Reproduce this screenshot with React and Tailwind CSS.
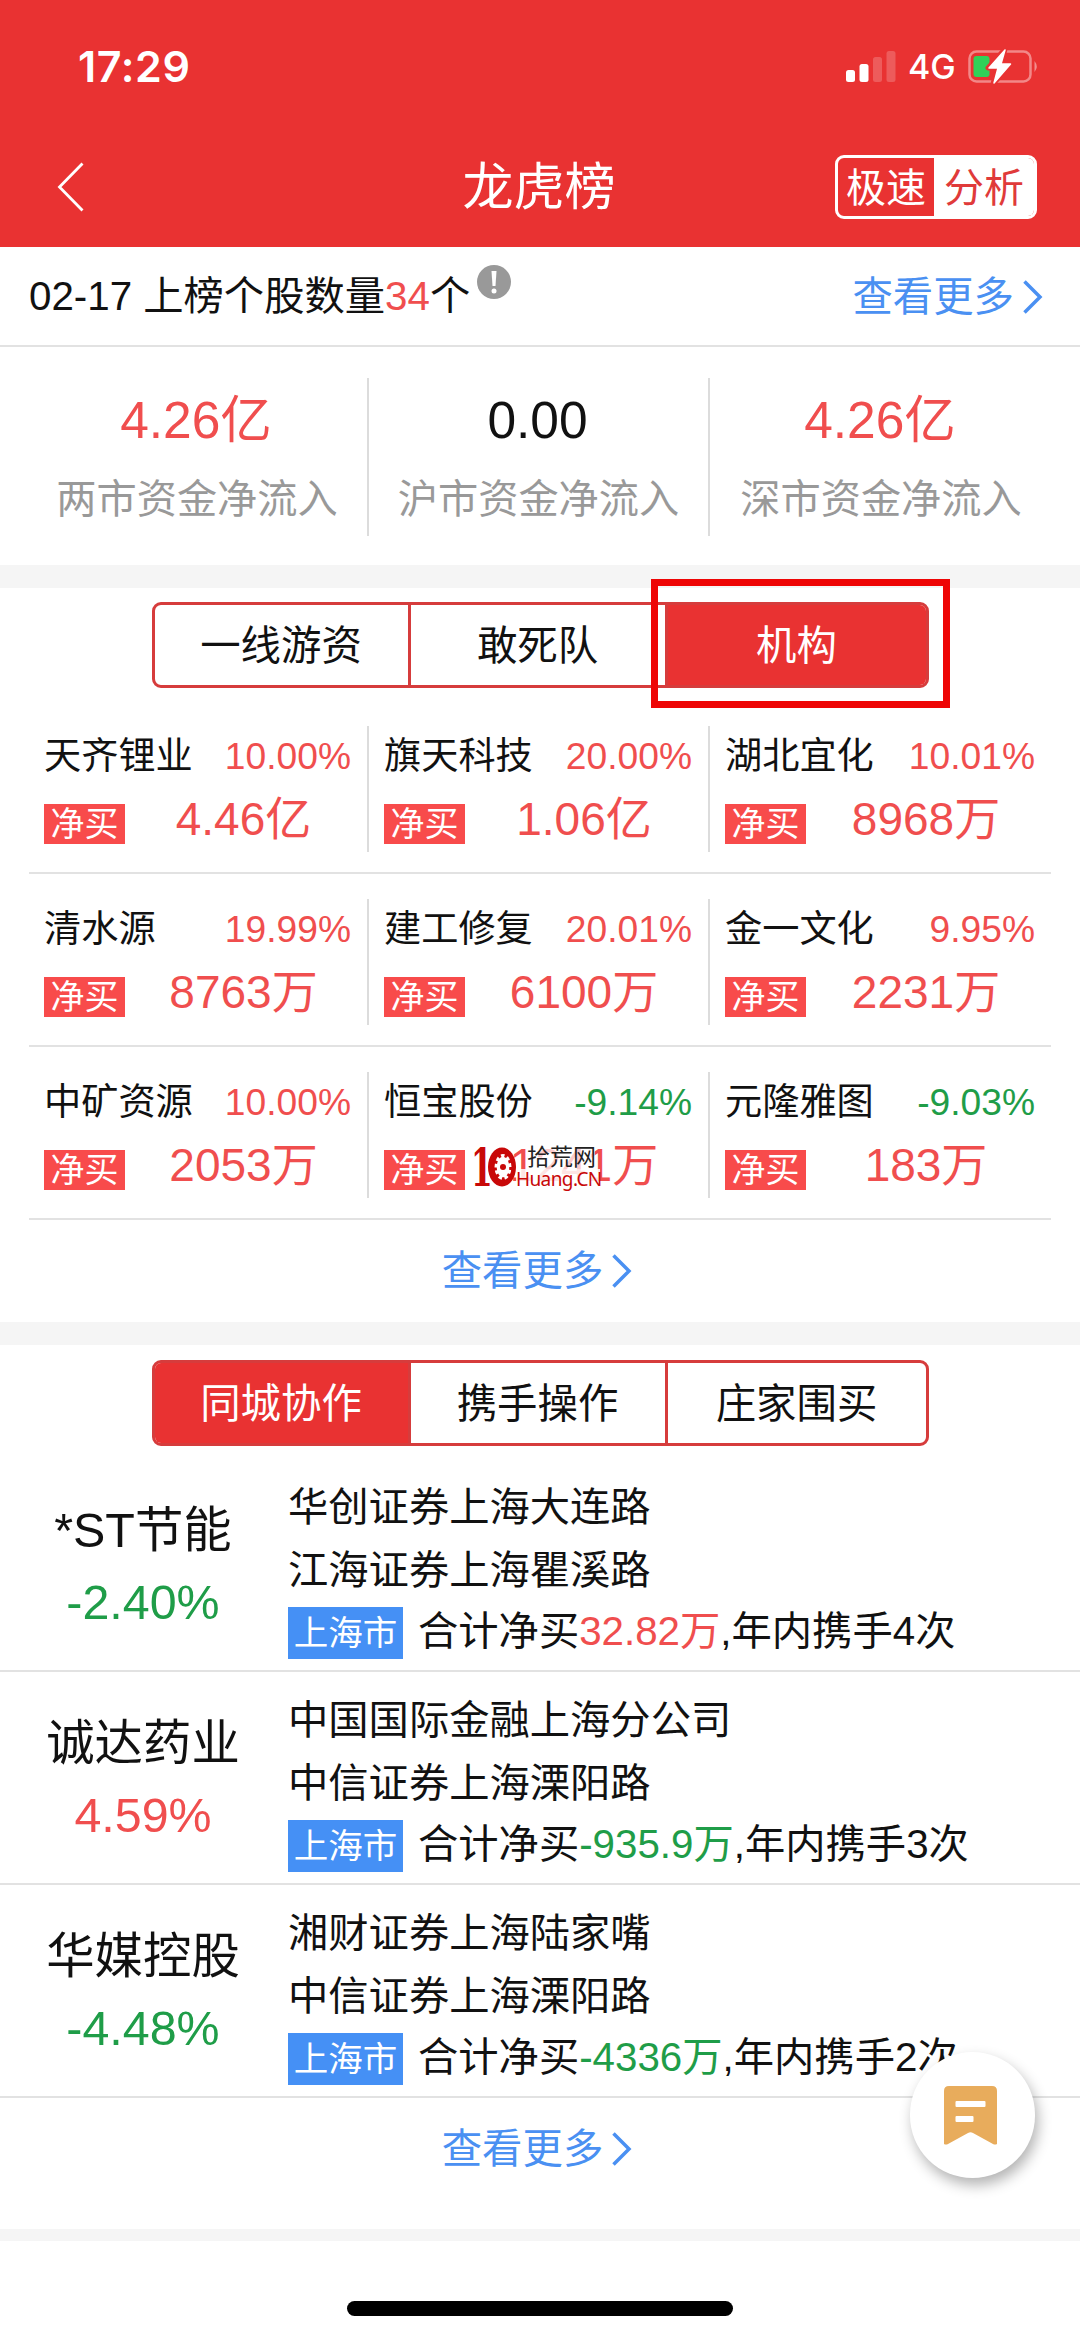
import React from "react";

const RED = "text-[#f04e4e]";
const GREEN = "text-[#1f9d48]";

const stats = [
  { value: "4.26亿", label: "两市资金净流入", color: RED },
  { value: "0.00", label: "沪市资金净流入", color: "text-[#111]" },
  { value: "4.26亿", label: "深市资金净流入", color: RED },
];

const stockRows = [
  [
    { name: "天齐锂业", pct: "10.00%", value: "4.46亿" },
    { name: "旗天科技", pct: "20.00%", value: "1.06亿" },
    { name: "湖北宜化", pct: "10.01%", value: "8968万" },
  ],
  [
    { name: "清水源", pct: "19.99%", value: "8763万" },
    { name: "建工修复", pct: "20.01%", value: "6100万" },
    { name: "金一文化", pct: "9.95%", value: "2231万" },
  ],
  [
    { name: "中矿资源", pct: "10.00%", value: "2053万" },
    { name: "恒宝股份", pct: "-9.14%", value: "1241万", stamped: true },
    { name: "元隆雅图", pct: "-9.03%", value: "183万" },
  ],
];

const deals = [
  { name: "*ST节能", pct: "-2.40%", first: "华创证券上海大连路", second: "江海证券上海瞿溪路", net: "32.82万", times: 4 },
  { name: "诚达药业", pct: "4.59%", first: "中国国际金融上海分公司", second: "中信证券上海溧阳路", net: "-935.9万", times: 3 },
  { name: "华媒控股", pct: "-4.48%", first: "湘财证券上海陆家嘴", second: "中信证券上海溧阳路", net: "-4336万", times: 2 },
];

const tone = (s) => (s.startsWith("-") ? GREEN : RED);

function StatusBar() {
  return (
    <div className="flex h-[134px] items-start justify-between pl-[78px] pr-[41px] text-white">
      <div className="mt-[41px] font-['Inter'] text-[43px] font-semibold leading-[50px] tracking-[0.6px]">17:29</div>
      <div className="mt-[46px] flex h-[40px] items-center">
        <svg width="50" height="32" viewBox="0 0 50 32" fill="#fff">
          <rect x="0" y="20" width="9" height="12" rx="2.5" />
          <rect x="13.5" y="14" width="9" height="18" rx="2.5" />
          <rect x="27" y="7" width="9" height="25" rx="2.5" opacity=".2" />
          <rect x="40.500" y="1" width="9" height="31" rx="2.5" opacity=".2" />
        </svg>
        <span className="ml-[12px] mt-[2px] w-[48px] font-['Inter'] text-[34px] font-medium leading-[40px]">4G</span>
        <svg className="ml-[12px]" width="71" height="36" viewBox="0 0 71 36">
          <rect x="1.500" y="3.500" width="61" height="30" rx="7" fill="none" stroke="#fff" strokeOpacity=".42" strokeWidth="2.500" />
          <path d="M66.500 13 q4.500 5.500 0 11 z" fill="#fff" opacity=".45" />
          <rect x="5.500" y="8" width="16" height="21" rx="3" fill="#30d158" />
          <path d="M37 1 L20 20 H29 L25 36 L43 16 H33.500 Z" fill="#fff" stroke="#e93232" strokeWidth="5" strokeLinejoin="round" />
          <path d="M37 2 L21 20 H30 L26 35 L42.500 16 H33 Z" fill="#fff" stroke="#fff" strokeWidth="1.500" strokeLinejoin="round" />
        </svg>
      </div>
    </div>
  );
}

function NavBar() {
  return (
    <div className="grid h-[113px] grid-cols-[1fr_auto_1fr] items-start px-[43px] text-white">
      <svg className="ml-[13px] mt-[27px]" width="30" height="52" viewBox="0 0 30 52" fill="none" stroke="#fff" strokeWidth="2.800">
        <path d="M26.500 2.500 L3.500 26 L26.500 49.500" />
      </svg>
      <h1 className="-ml-[2px] mt-[22px] text-[51px] font-normal leading-[64px]">龙虎榜</h1>
      <div className="mt-[21px] flex h-[64px] w-[202px] justify-self-end overflow-hidden rounded-[9px] border-[3px] border-white text-center text-[40px] leading-[60px]">
        <span className="w-[96px]">极速</span>
        <span className="flex-1 bg-white text-[#e03a3a]">分析</span>
      </div>
    </div>
  );
}

function Chevron() {
  return (
    <svg width="22" height="36" viewBox="0 0 22 36" fill="none" stroke="#4a90f2" strokeWidth="3.500">
      <path d="M2.500 2.500 L18 18 L2.500 33.500" />
    </svg>
  );
}

function More() {
  return (
    <a className="flex items-center gap-[8px] text-[40.4px] leading-[50px] text-[#4a90f2]">
      查看更多
      <Chevron />
    </a>
  );
}

function Tabs({ items, active }) {
  return (
    <div className="mx-auto grid h-[86px] w-[777px] grid-cols-[256px_257px_258px] overflow-hidden rounded-[9px] border-[3px] border-[#d63c3c] text-center text-[40.4px] leading-[83px]">
      {items.map((t, i) => (
        <div
          key={t}
          className={
            (i === active ? "bg-[#e93232] text-white" : "text-[#111]") +
            (i < 2 ? " border-r-[3px] border-[#d63c3c]" : "")
          }
        >
          {t}
        </div>
      ))}
    </div>
  );
}

/* Site stamp that overlaps the amount in one cell */
function Stamp() {
  return (
    <div className="absolute left-[104px] top-[74px] flex h-[44px] w-[134px]">
      <span className="w-[15px] font-['DejaVu_Serif'] text-[52px] font-bold leading-[44px] text-[#c80808]">
        <span className="inline-block origin-left -translate-x-[2px] scale-x-[.6]">1</span>
      </span>
      <svg className="mt-[1px]" width="28" height="40" viewBox="0 0 28 40">
        <ellipse cx="14" cy="20" rx="14" ry="19.500" fill="#c80808" />
        <ellipse cx="15" cy="20" rx="8.500" ry="13" fill="#fff" />
        <ellipse cx="15" cy="20" rx="8" ry="12" fill="none" stroke="#c80808" strokeWidth="3.500" strokeDasharray="3 4" />
        <circle cx="15" cy="20" r="3" fill="#c80808" />
      </svg>
      <div className="whitespace-nowrap">
        <div className="ml-[11px] w-[68px] bg-white/70 text-[23px] leading-[23px] text-[#222]">拾荒网</div>
        <div className="w-[84px] bg-white/85 font-['Noto_Sans'] text-[19px] leading-[20px] tracking-[-0.6px] text-[#c80808]">Huang.CN</div>
      </div>
    </div>
  );
}

function StockCell({ stock, divided }) {
  return (
    <div className={"relative mt-[25px] h-[126px] pl-[15px] pr-[16px] " + (divided ? "border-r-2 border-[#dcdcdc]" : "")}>
      <div className="flex h-[61px] items-center justify-between text-[37.2px]">
        <span className="text-[#111]">{stock.name}</span>
        <span className={tone(stock.pct)}>{stock.pct}</span>
      </div>
      <div className="mt-[7px] flex h-[56px] items-start">
        <span className="mt-[10px] h-[40px] w-[81px] bg-[#f84b4b] text-center text-[34px] leading-[40px] text-white">净买</span>
        <span className={"flex-1 pl-[11px] text-center text-[46px] leading-[50px] " + RED}>{stock.value}</span>
      </div>
      {stock.stamped && <Stamp />}
    </div>
  );
}

function Deal({ deal }) {
  return (
    <div className="flex h-[213px] border-b-2 border-[#e2e2e2] text-[#111]">
      <div className="w-[286px] pt-[39px] text-center">
        <div className="text-[48.4px] leading-[64px]">{deal.name}</div>
        <div className={"mt-[8px] text-[48.4px] leading-[64px] " + tone(deal.pct)}>{deal.pct}</div>
      </div>
      <div className="pl-[2px] pt-[17px] text-[40.3px] leading-[63px]">
        <div>{deal.first}</div>
        <div>{deal.second}</div>
        <div className="mt-[5px] flex items-start">
          <span className="h-[52px] w-[115px] bg-[#4590f5] text-center text-[34.5px] leading-[52px] text-white">上海市</span>
          <span className="ml-[15px] whitespace-nowrap leading-[49px]">
            合计净买<span className={tone(deal.net)}>{deal.net}</span>,年内携手{deal.times}次
          </span>
        </div>
      </div>
    </div>
  );
}

export default function App() {
  return (
    <div className="relative flex h-[2339px] w-[1080px] flex-col overflow-hidden bg-white font-['Liberation_Sans','Noto_Sans_CJK_SC',sans-serif]">
      <header className="h-[247px] shrink-0 bg-[#e93232]">
        <StatusBar />
        <NavBar />
      </header>

      <section className="flex h-[100px] shrink-0 items-center justify-between border-b-2 border-[#e2e2e2] pl-[29px] pr-[36px] pt-[2px]">
        <div className="flex text-[40.300px] leading-[50px] text-[#111]">
          <span className="whitespace-pre">02-17 上榜个股数量<span className={RED}>34</span>个</span>
          <svg className="-mt-[7px] ml-[7px]" width="34" height="34" viewBox="0 0 34 34">
            <circle cx="17" cy="17" r="17" fill="#999" />
            <path d="M14.500 6 H19.500 L18.500 21 H15.500 Z" fill="#fff" />
            <circle cx="17" cy="26" r="2.500" fill="#fff" />
          </svg>
        </div>
        <More />
      </section>

      <section className="grid h-[218px] shrink-0 grid-cols-[342px_341px_342px] pl-[27px] pt-[31px]">
        {stats.map((s, i) => (
          <div key={s.label} className={"h-[158px] text-center " + (i < 2 ? "border-r-2 border-[#dcdcdc]" : "")}>
            <div className={"-ml-[2px] mt-[10px] text-[51.5px] leading-[64px] " + s.color}>{s.value}</div>
            <div className="mt-[23px] text-[40.200px] leading-[50px] text-[#999]">{s.label}</div>
          </div>
        ))}
      </section>

      <div className="h-[23px] shrink-0 bg-[#f5f5f5]" />

      <section className="shrink-0">
        <div className="relative h-[113px] pt-[14px]">
          <Tabs items={["一线游资", "敢死队", "机构"]} active={2} />
          <div className="absolute left-[651px] top-[-9px] h-[129px] w-[299px] border-[7px] border-[#ee0505]" />
        </div>
        {stockRows.map((row, i) => (
          <div key={i} className="mx-[29px] grid h-[173px] grid-cols-[340px_341px_341px] border-b-2 border-[#e2e2e2]">
            {row.map((s, j) => (
              <StockCell key={s.name} stock={s} divided={j < 2} />
            ))}
          </div>
        ))}
        <div className="flex h-[102px] items-center justify-center pr-[5px]">
          <More />
        </div>
      </section>

      <div className="h-[23px] shrink-0 bg-[#f5f5f5]" />

      <section className="shrink-0">
        <div className="h-[114px] pt-[15px]">
          <Tabs items={["同城协作", "携手操作", "庄家围买"]} active={0} />
        </div>
        {deals.map((d) => (
          <Deal key={d.name} deal={d} />
        ))}
        <div className="flex h-[101px] items-center justify-center pr-[5px]">
          <More />
        </div>
      </section>

      <div className="mt-[30px] h-[12px] shrink-0 bg-[#f5f5f5]" />
      <div className="mx-auto mt-[60px] h-[15px] w-[386px] shrink-0 rounded-full bg-black" />

      <button className="absolute left-[910px] top-[2052px] flex h-[126px] w-[125px] items-center justify-center rounded-full bg-white shadow-[3px_7px_14px_rgba(0,0,0,0.3)]">
        <svg className="-ml-[4px]" width="53" height="59" viewBox="0 0 53 59">
          <path d="M5 0 H48 Q53 0 53 5 V58 Q51 59 49 58 L29 47 Q26.500 45.500 24 47 L4 58 Q2 59 0 58 V5 Q0 0 5 0 Z" fill="#e8ac5c" />
          <rect x="11.500" y="15" width="30" height="6" rx="1" fill="#fff" />
          <rect x="11.500" y="30" width="18" height="6" rx="1" fill="#fff" />
        </svg>
      </button>
    </div>
  );
}
